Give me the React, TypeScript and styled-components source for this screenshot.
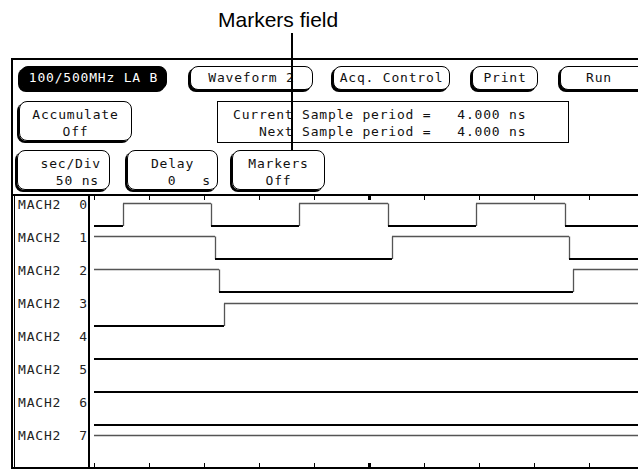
import styled, { createGlobalStyle } from "styled-components";

const GlobalStyle = createGlobalStyle`
  html, body {
    margin: 0;
    padding: 0;
    background: #fff;
    overflow: hidden;
  }
`;

const Page = styled.div`
  position: relative;
  width: 638px;
  height: 470px;
  overflow: hidden;
  font-family: "DejaVu Sans Mono", "Liberation Mono", monospace;
  font-size: 13px;
  letter-spacing: 0.8px;
  color: #111;
`;

const Caption = styled.div`
  height: 58px;
  box-sizing: border-box;
  padding: 9px 0 0 218px;
  font-family: "Liberation Sans", Arial, sans-serif;
  font-size: 21px;
  line-height: 21px;
  letter-spacing: 0;
  color: #000;
`;

/* callout line that runs over the buttons */
const Pointer = styled.div`
  position: absolute;
  left: 291px;
  top: 33px;
  width: 2px;
  height: 117px;
  background: #000;
  z-index: 2;
`;

const Screen = styled.div`
  margin-left: 11px;
  width: 660px;
  height: 411px;
  box-sizing: border-box;
  border: 2px solid #000;
  border-right: none;
  display: flex;
  flex-direction: column;
`;

const Row = styled.div<{ $top: number; $left: number }>`
  display: flex;
  align-items: flex-start;
  margin-top: ${(p) => p.$top}px;
  padding-left: ${(p) => p.$left}px;
`;

const TopKey = styled.div<{ $w: number; $gap?: number; $dark?: boolean; $pad?: number }>`
  width: ${(p) => p.$w}px;
  height: 24px;
  margin-left: ${(p) => p.$gap || 0}px;
  box-sizing: border-box;
  border: 1px solid #000;
  border-radius: 8px;
  box-shadow: -2px 2px 0 #000;
  background: ${(p) => (p.$dark ? "#000" : "#fff")};
  color: ${(p) => (p.$dark ? "#fff" : "#111")};
  line-height: 22px;
  text-align: ${(p) => (p.$pad ? "left" : "center")};
  padding-left: ${(p) => p.$pad || 0}px;
  white-space: pre;
  flex-shrink: 0;
`;

const FieldKey = styled.div<{ $w: number; $gap?: number }>`
  width: ${(p) => p.$w}px;
  height: 40px;
  margin-left: ${(p) => p.$gap || 0}px;
  box-sizing: border-box;
  border: 1px solid #000;
  border-radius: 8px;
  box-shadow: -2px 2px 0 #000;
  padding-top: 4px;
  display: flex;
  flex-direction: column;
  flex-shrink: 0;
`;

const KeyLine = styled.div<{ $align?: "left" | "center" | "right"; $right?: number }>`
  line-height: 17px;
  white-space: pre;
  text-align: ${(p) => p.$align || "center"};
  padding-right: ${(p) => p.$right || 0}px;
`;

const InfoBox = styled.div<{ $gap: number }>`
  width: 352px;
  height: 42px;
  margin-left: ${(p) => p.$gap}px;
  box-sizing: border-box;
  border: 1px solid #000;
  padding: 4px 0 0 15px;
`;

const InfoLine = styled.div`
  line-height: 17px;
  white-space: pre;
`;

const WaveArea = styled.div`
  margin-top: 4px;
  flex: 1;
  display: flex;
  border-top: 2px solid #000;
`;

const LabelColumn = styled.div`
  width: 76px;
  margin-left: 1px;
  box-sizing: border-box;
  border-left: 1px solid #000;
  border-right: 2px solid #000;
  padding-top: 2px;
  flex-shrink: 0;
`;

const Label = styled.div`
  height: 33px;
  display: flex;
  justify-content: space-between;
  padding: 0 0 0 3px;
  line-height: 14px;
  color: #222;
`;

const Plot = styled.svg`
  display: block;
  flex-shrink: 0;
`;

const signals = [
  { start: 0, edges: [123, 211, 299, 388, 476, 565] },
  { start: 1, edges: [215, 392, 569] },
  { start: 1, edges: [219, 573] },
  { start: 0, edges: [224] },
  { start: 0, edges: [] },
  { start: 0, edges: [] },
  { start: 0, edges: [] },
  { start: 1, edges: [] },
];

const ticks = [94, 149, 204, 259, 314, 369, 424, 479, 534, 589];

const Waveforms = () => {
  const parts: JSX.Element[] = [];
  signals.forEach((s, r) => {
    const hi = Math.round(203 + 33.2 * r) + 0.5;
    const lo = Math.round(226 + 33.2 * r);
    let level = s.start;
    let x = 94;
    const stops = [...s.edges, 640];
    stops.forEach((edge, i) => {
      parts.push(
        level ? (
          <line key={`h${r}-${i}`} x1={x} y1={hi} x2={edge} y2={hi} stroke="#555" strokeWidth={1.3} />
        ) : (
          <line key={`h${r}-${i}`} x1={x} y1={lo} x2={edge} y2={lo} stroke="#000" strokeWidth={2} />
        )
      );
      if (edge < 640) {
        parts.push(
          <line key={`v${r}-${i}`} x1={edge + 0.5} y1={hi} x2={edge + 0.5} y2={lo} stroke="#555" strokeWidth={1.3} />
        );
      }
      x = edge;
      level = level ? 0 : 1;
    });
  });

  return (
    <Plot width={550} height={271} viewBox="90 196 550 271">
      {ticks.map((t) => (
        <g key={t}>
          <rect x={t === 369 ? t - 1 : t} y={196} width={t === 369 ? 3 : 1} height={4} fill="#000" />
          <rect x={t === 369 ? t - 1 : t} y={463} width={t === 369 ? 3 : 1} height={4} fill="#000" />
        </g>
      ))}
      {parts}
    </Plot>
  );
};

const App = () => {
  return (
    <Page>
      <GlobalStyle />
      <Caption>Markers field</Caption>
      <Pointer />
      <Screen>
        <Row $top={6} $left={7}>
          <TopKey $w={147} $dark>
            100/500MHz LA B
          </TopKey>
          <TopKey $w={123} $gap={23}>
            Waveform 2
          </TopKey>
          <TopKey $w={117} $gap={20}>
            Acq. Control
          </TopKey>
          <TopKey $w={66} $gap={22}>
            Print
          </TopKey>
          <TopKey $w={100} $gap={22} $pad={25}>
            Run
          </TopKey>
        </Row>
        <Row $top={11} $left={6}>
          <FieldKey $w={113}>
            <KeyLine>Accumulate</KeyLine>
            <KeyLine>Off</KeyLine>
          </FieldKey>
          <InfoBox $gap={85}>
            <InfoLine>Current Sample period =   4.000 ns</InfoLine>
            <InfoLine>   Next Sample period =   4.000 ns</InfoLine>
          </InfoBox>
        </Row>
        <Row $top={7} $left={4}>
          <FieldKey $w={93}>
            <KeyLine $align="right" $right={8}>
              sec/Div
            </KeyLine>
            <KeyLine $align="right" $right={10}>
              50 ns
            </KeyLine>
          </FieldKey>
          <FieldKey $w={91} $gap={17}>
            <KeyLine>Delay</KeyLine>
            <KeyLine $align="right" $right={6}>
              0   s
            </KeyLine>
          </FieldKey>
          <FieldKey $w={93} $gap={14}>
            <KeyLine>Markers</KeyLine>
            <KeyLine>Off</KeyLine>
          </FieldKey>
        </Row>
        <WaveArea>
          <LabelColumn>
            {signals.map((_, i) => (
              <Label key={i}>
                <span>MACH2</span>
                <span>{i}</span>
              </Label>
            ))}
          </LabelColumn>
          <Waveforms />
        </WaveArea>
      </Screen>
    </Page>
  );
};

export default App;
